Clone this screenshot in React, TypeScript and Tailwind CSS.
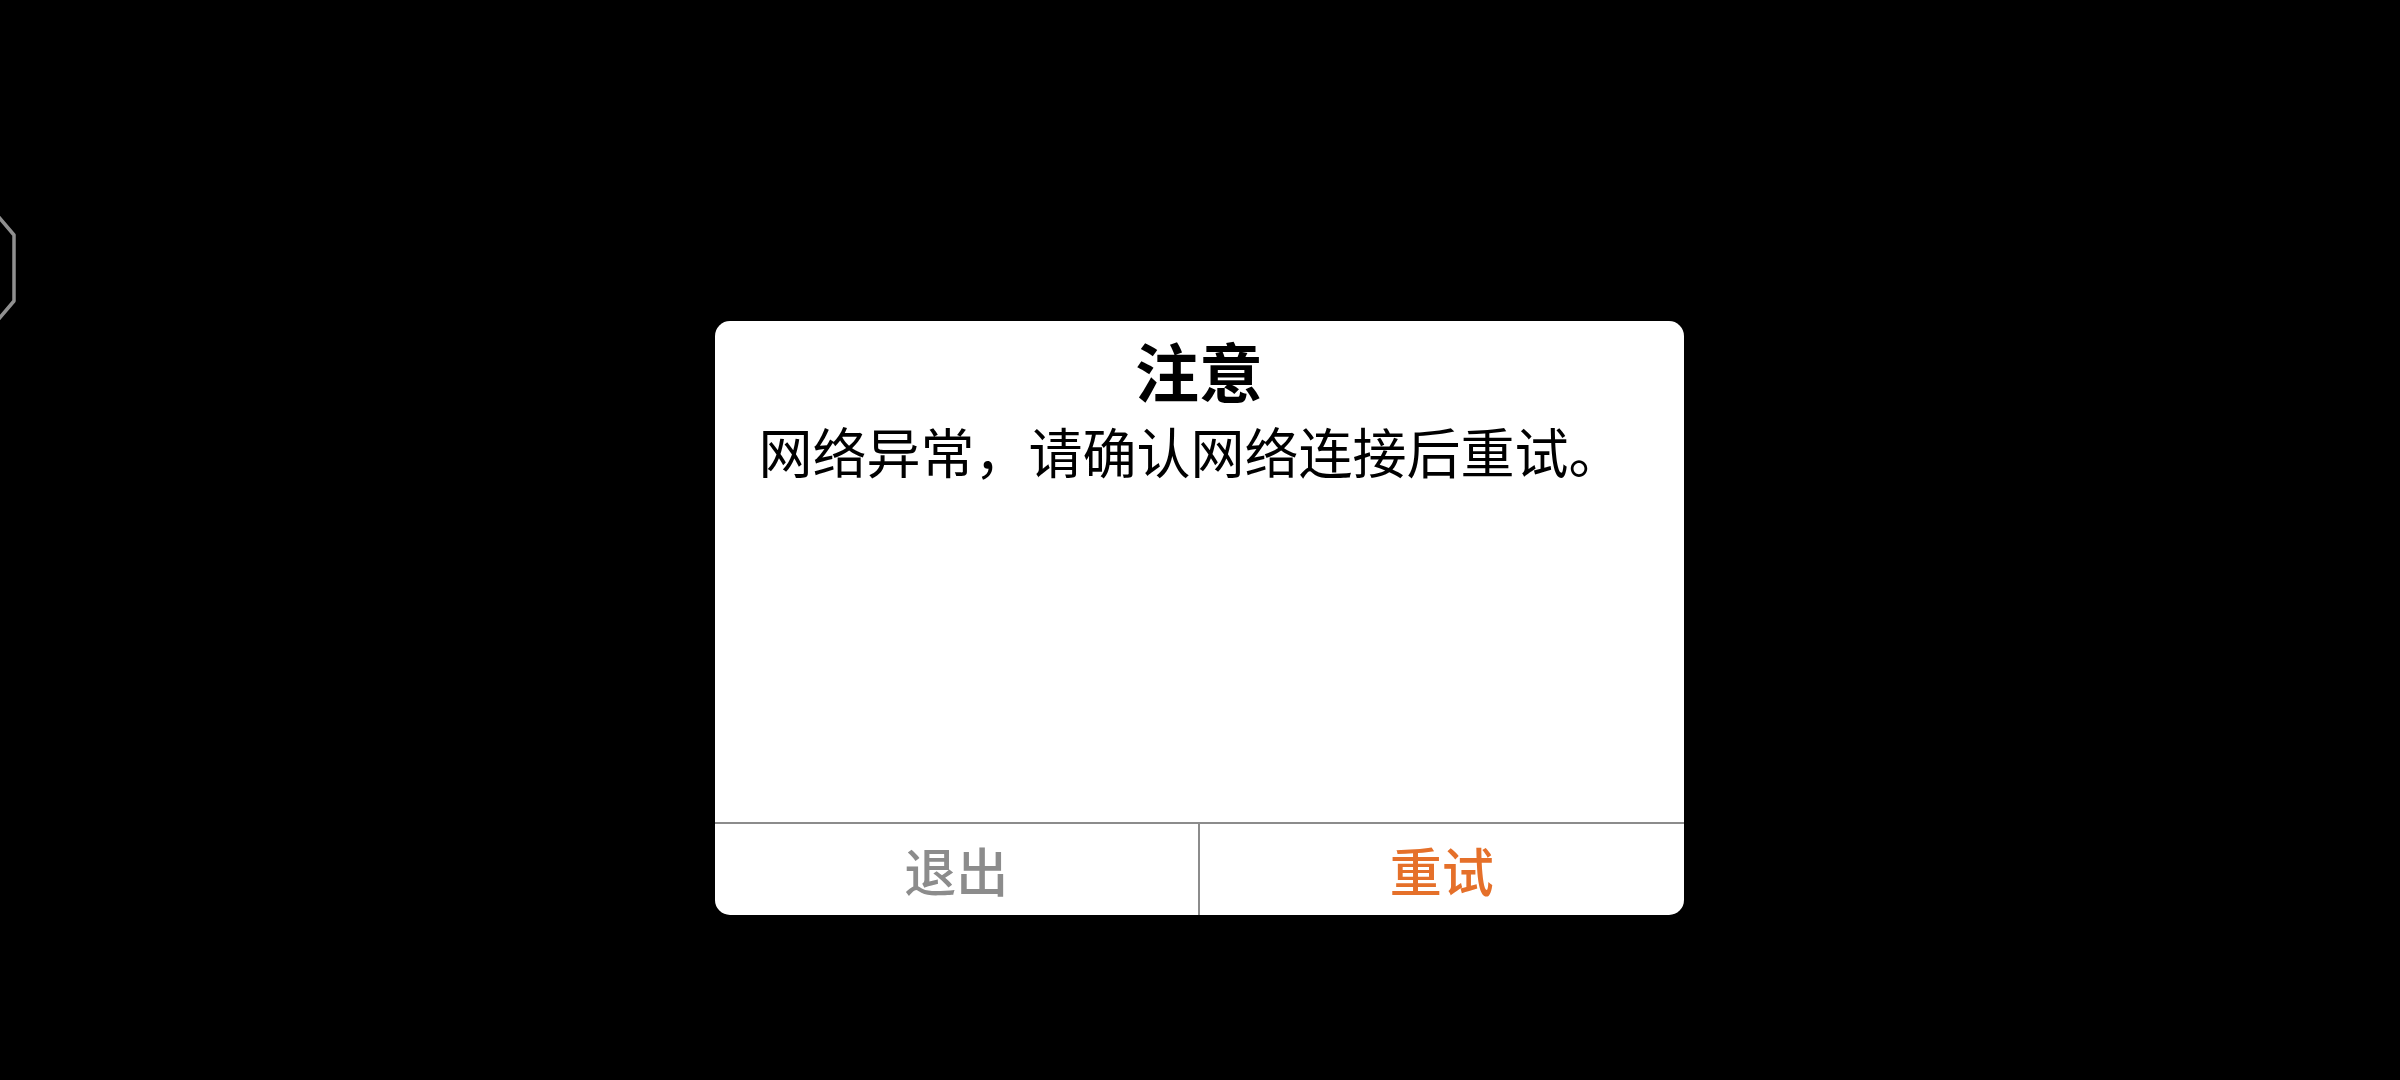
import React from "react";

export default function App() {
  return (
    <div
      className="relative w-[2400px] h-[1080px] bg-black overflow-hidden flex items-start justify-center"
      style={{ fontFamily: '"Noto Sans CJK SC", "Noto Sans", sans-serif' }}
    >
      <svg
        className="absolute left-0 top-[200px]"
        width="24"
        height="130"
        viewBox="0 0 24 130"
        fill="none"
      >
        <path
          d="M-3 15 L14 35 L14 101 L-3 121"
          stroke="#909090"
          strokeWidth="3.5"
          strokeLinejoin="round"
        />
      </svg>

      <div className="mt-[321px] ml-[-2px] w-[969px] h-[594px] bg-white rounded-[15px] flex flex-col overflow-hidden">
        <div className="flex-1 flex flex-col">
          <div className="pt-[16px] text-center text-[64px] leading-[64px] font-bold text-black">
            注意
          </div>
          <div className="mt-[20px] pl-[44px] text-[54px] leading-[60px] text-black whitespace-nowrap">
            网络异常，请确认网络连接后重试。
          </div>
        </div>
        <div className="h-[2px] bg-[#8c8c8c]" />
        <div className="h-[91px] flex">
          <div className="flex-1 flex items-center justify-center text-[52px] font-medium text-[#8c8c8c]">
            退出
          </div>
          <div className="w-[2px] bg-[#8c8c8c]" />
          <div className="flex-1 flex items-center justify-center text-[52px] font-medium text-[#e5702a]">
            重试
          </div>
        </div>
      </div>
    </div>
  );
}
